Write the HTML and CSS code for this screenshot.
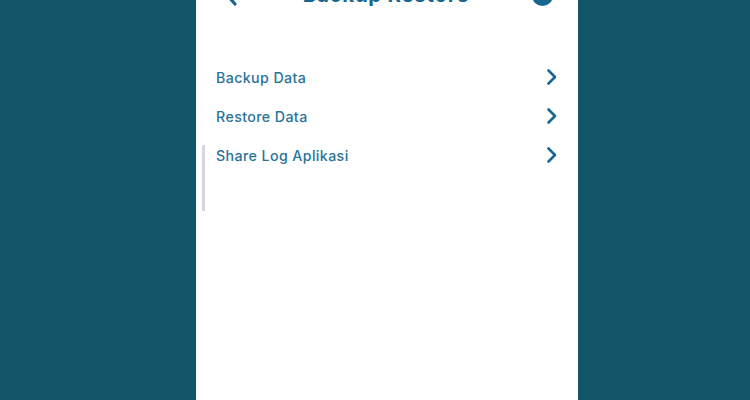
FILE: index.html
```html
<!DOCTYPE html>
<html lang="id">
<head>
<meta charset="utf-8">
<title>Backup Restore</title>
<link rel="stylesheet" href="styles.css">
</head>
<body>
<main class="phone">
  <header class="topbar">
    <svg class="back" width="14" height="24" viewBox="0 0 14 24"><path d="M11 3 3 12l8 9" fill="none" stroke="#17668f" stroke-width="3.2" stroke-linecap="round" stroke-linejoin="round"/></svg>
    <h1 class="title">Backup Restore</h1>
    <span class="help"></span>
  </header>
  <ul class="menu">
    <li class="item"><span>Backup Data</span><svg class="chev" width="12" height="18" viewBox="0 0 12 18"><path d="M2.5 2.5 9 9l-6.500 6.500" fill="none" stroke="#17668f" stroke-width="2.600" stroke-linecap="round" stroke-linejoin="round"/></svg></li>
    <li class="item"><span>Restore Data</span><svg class="chev" width="12" height="18" viewBox="0 0 12 18"><path d="M2.5 2.5 9 9l-6.500 6.500" fill="none" stroke="#17668f" stroke-width="2.600" stroke-linecap="round" stroke-linejoin="round"/></svg></li>
    <li class="item"><span>Share Log Aplikasi</span><svg class="chev" width="12" height="18" viewBox="0 0 12 18"><path d="M2.5 2.5 9 9l-6.500 6.500" fill="none" stroke="#17668f" stroke-width="2.600" stroke-linecap="round" stroke-linejoin="round"/></svg></li>
  </ul>
  <div class="scrollbar"></div>
</main>
</body>
</html>
```
FILE: styles.css
```css
html, body {
  margin: 0;
  height: 100%;
  overflow: hidden;
  background: #14556a;
}
body {
  display: flex;
  font-family: Inter, "Open Sans", "Liberation Sans", sans-serif;
}
.phone {
  position: relative;
  width: 382px;
  height: 400px;
  margin-left: 196px;
  background: #fff;
  overflow: hidden;
}
.topbar {
  display: flex;
  align-items: center;
  justify-content: space-between;
  height: 24px;
  margin-top: -17px;
  padding: 0 25px 0 28px;
}
.back { flex: none; }
.title {
  margin: 0 0 0 2px;
  font-size: 20.500px;
  font-weight: 700;
  letter-spacing: 0.7px;
  line-height: 24px;
  color: #17668f;
}
.help {
  flex: none;
  width: 21px;
  height: 21px;
  border-radius: 50%;
  background: #17668f;
}
.menu {
  list-style: none;
  margin: 58px 0 0;
  padding: 0 20px;
  display: flex;
  flex-direction: column;
  gap: 15px;
}
.item {
  display: flex;
  align-items: center;
  justify-content: space-between;
  height: 24px;
  font-size: 14.200px;
  font-weight: 500;
  letter-spacing: 0.4px;
  color: #2a7399;
}
.chev { flex: none; }
.scrollbar {
  position: absolute;
  left: 6px;
  top: 145px;
  width: 3px;
  height: 66px;
  background: #d9d6d9;
}
```
